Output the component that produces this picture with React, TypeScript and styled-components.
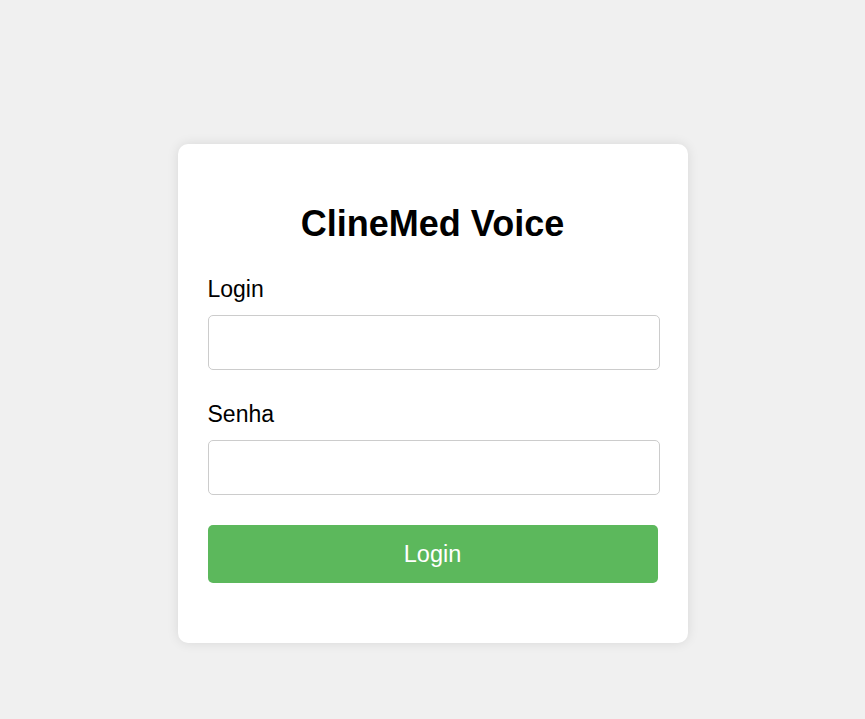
import React, { useState } from 'react';
import styled, { createGlobalStyle } from 'styled-components';

const GlobalStyle = createGlobalStyle`
  html, body {
    margin: 0;
    padding: 0;
    background: #f0f0f0;
    font-family: 'Liberation Sans', Arial, sans-serif;
  }
`;

const Page = styled('div')({
  minHeight: '719px',
  display: 'flex',
  justifyContent: 'center',
  alignItems: 'flex-start',
  paddingTop: '144px',
  boxSizing: 'border-box',
});

const Card = styled('div')({
  width: '510px',
  boxSizing: 'border-box',
  background: '#fff',
  borderRadius: '10px',
  boxShadow: '0 0 12px rgba(0, 0, 0, 0.1)',
  padding: '30px 30px 60px',
});

const Title = styled('h2')({
  margin: '29px 0 30px',
  textAlign: 'center',
  fontSize: '36px',
  lineHeight: '41px',
  fontWeight: 700,
  color: '#000',
});

const Field = styled('div')(({ spacing = 30 }: { spacing?: number }) => ({
  display: 'flex',
  flexDirection: 'column',
  marginBottom: `${spacing}px`,
}));

const Label = styled('label')({
  fontSize: '23px',
  lineHeight: '27px',
  color: '#000',
  paddingTop: '2px',
  marginBottom: '12px',
});

const Input = styled('input')({
  width: 'calc(100% + 2px)',
  height: '55px',
  boxSizing: 'border-box',
  border: '1px solid #ccc',
  borderRadius: '5px',
  padding: '0 12px',
  fontSize: '20px',
  fontFamily: 'inherit',
  outline: 'none',
});

const Button = styled('button')({
  width: '100%',
  height: '58px',
  border: 'none',
  borderRadius: '5px',
  background: '#5cb85c',
  color: '#fff',
  fontSize: '23.5px',
  fontFamily: 'inherit',
  cursor: 'pointer',
  display: 'block',
});

const App = (): JSX.Element => {
  const [login, setLogin] = useState('');
  const [senha, setSenha] = useState('');
  return (
    <>
      <GlobalStyle />
      <Page>
        <Card>
          <Title>ClineMed Voice</Title>
          <form onSubmit={(e) => e.preventDefault()}>
            <Field spacing={29}>
              <Label htmlFor="login">Login</Label>
              <Input
                id="login"
                value={login}
                onChange={(e) => setLogin(e.target.value)}
              />
            </Field>
            <Field spacing={30}>
              <Label htmlFor="senha">Senha</Label>
              <Input
                id="senha"
                type="password"
                value={senha}
                onChange={(e) => setSenha(e.target.value)}
              />
            </Field>
            <Button type="submit">Login</Button>
          </form>
        </Card>
      </Page>
    </>
  );
};

export default App;
